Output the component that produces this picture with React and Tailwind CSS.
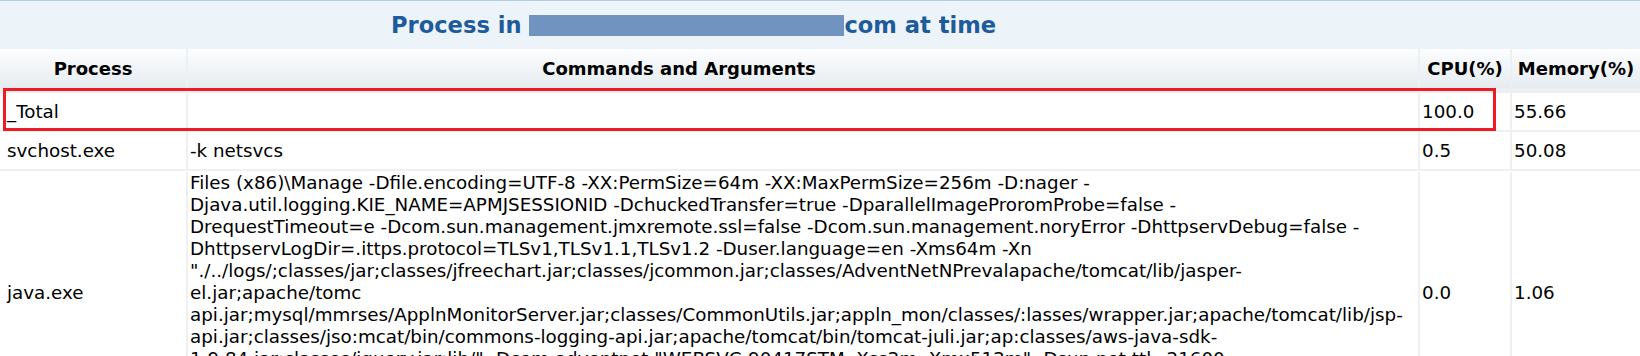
const rows = [
  { name: '_Total', cmd: [''], cpu: '100.0', mem: '55.66' },
  { name: 'svchost.exe', cmd: ['-k netsvcs'], cpu: '0.5', mem: '50.08' },
  {
    name: 'java.exe',
    cmd: [
      'Files (x86)\\Manage -Dfile.encoding=UTF-8 -XX:PermSize=64m -XX:MaxPermSize=256m -D:nager -',
      'Djava.util.logging.KIE_NAME=APMJSESSIONID -DchuckedTransfer=true -DparallelImageProromProbe=false -',
      'DrequestTimeout=e -Dcom.sun.management.jmxremote.ssl=false -Dcom.sun.management.noryError -DhttpservDebug=false -',
      'DhttpservLogDir=.ittps.protocol=TLSv1,TLSv1.1,TLSv1.2 -Duser.language=en -Xms64m -Xn',
      '"./../logs/;classes/jar;classes/jfreechart.jar;classes/jcommon.jar;classes/AdventNetNPrevalapache/tomcat/lib/jasper-',
      'el.jar;apache/tomc',
      'api.jar;mysql/mmrses/ApplnMonitorServer.jar;classes/CommonUtils.jar;appln_mon/classes/:lasses/wrapper.jar;apache/tomcat/lib/jsp-',
      'api.jar;classes/jso:mcat/bin/commons-logging-api.jar;apache/tomcat/bin/tomcat-juli.jar;ap:classes/aws-java-sdk-',
      '1.9.84.jar;classes/jquery.jar;lib/" -Dcom.adventnet "WEBSVC-90417STM -Xss2m -Xmx512m" -Dsun.net.ttl=21600',
      'classes/AdventNetLogging.jar;classes/AdventNetSnmp.jar;lib/mssql.jar -Dprogram.name=wrapper',
      'com.adventnet.appmanager.server.Starter',
    ],
    cpu: '0.0',
    mem: '1.06',
  },
];

export default function App() {
  return (
    <div className="relative w-[1640px] h-[356px] overflow-hidden bg-white font-['DejaVu_Sans',sans-serif] text-[18.3px] text-black">
      {/* title band */}
      <div className="h-[49px] border-t border-[#b5cde2] bg-[#edf4f9] flex items-center">
        <h1 className="pl-[391px] text-[22.6px] font-bold text-[#1d5b9b] leading-none flex items-center whitespace-nowrap">
          <span>Process in&nbsp;</span>
          <span className="inline-block w-[315px] h-[21px] bg-[#7093c0]" />
          <span>com at time</span>
        </h1>
      </div>

      {/* header */}
      <div className="grid grid-cols-[186px_1232px_92px_130px] h-[44px] border-b-[5px] border-[#eceff1] bg-gradient-to-b from-[#fcfdfe] to-[#e5ecf0] font-bold text-[18px]">
        <div className="flex items-center justify-center">Process</div>
        <div className="flex items-center justify-center pr-[248px] border-l-2 border-[#edf0f2]">Commands and Arguments</div>
        <div className="flex items-center justify-center border-l-2 border-[#edf0f2]">CPU(%)</div>
        <div className="flex items-center justify-center border-l-2 border-[#edf0f2]">Memory(%)</div>
      </div>

      {/* rows */}
      {rows.map((r) => (
        <div
          key={r.name}
          className={`grid grid-cols-[186px_1232px_92px_130px] border-b-2 border-[#f0f0f0] ${r.cmd.length > 1 ? 'py-[1px]' : 'h-[39px]'}`}
        >
          <div className="flex items-center pl-[7px]">{r.name}</div>
          <div className="flex flex-col justify-center pl-[2px] border-l-2 border-[#f0f0f0] leading-[22px]">
            {r.cmd.map((line, i) => (
              <div key={i} className="whitespace-nowrap">{line}</div>
            ))}
          </div>
          <div className="flex items-center pl-[2px] border-l-2 border-[#f0f0f0]">{r.cpu}</div>
          <div className="flex items-center pl-[2px] border-l-2 border-[#f0f0f0]">{r.mem}</div>
        </div>
      ))}

      {/* annotation */}
      <div className="absolute left-[3px] top-[88px] w-[1493px] h-[43px] border-[3px] border-[#ed1c24] pointer-events-none" />
    </div>
  );
}
